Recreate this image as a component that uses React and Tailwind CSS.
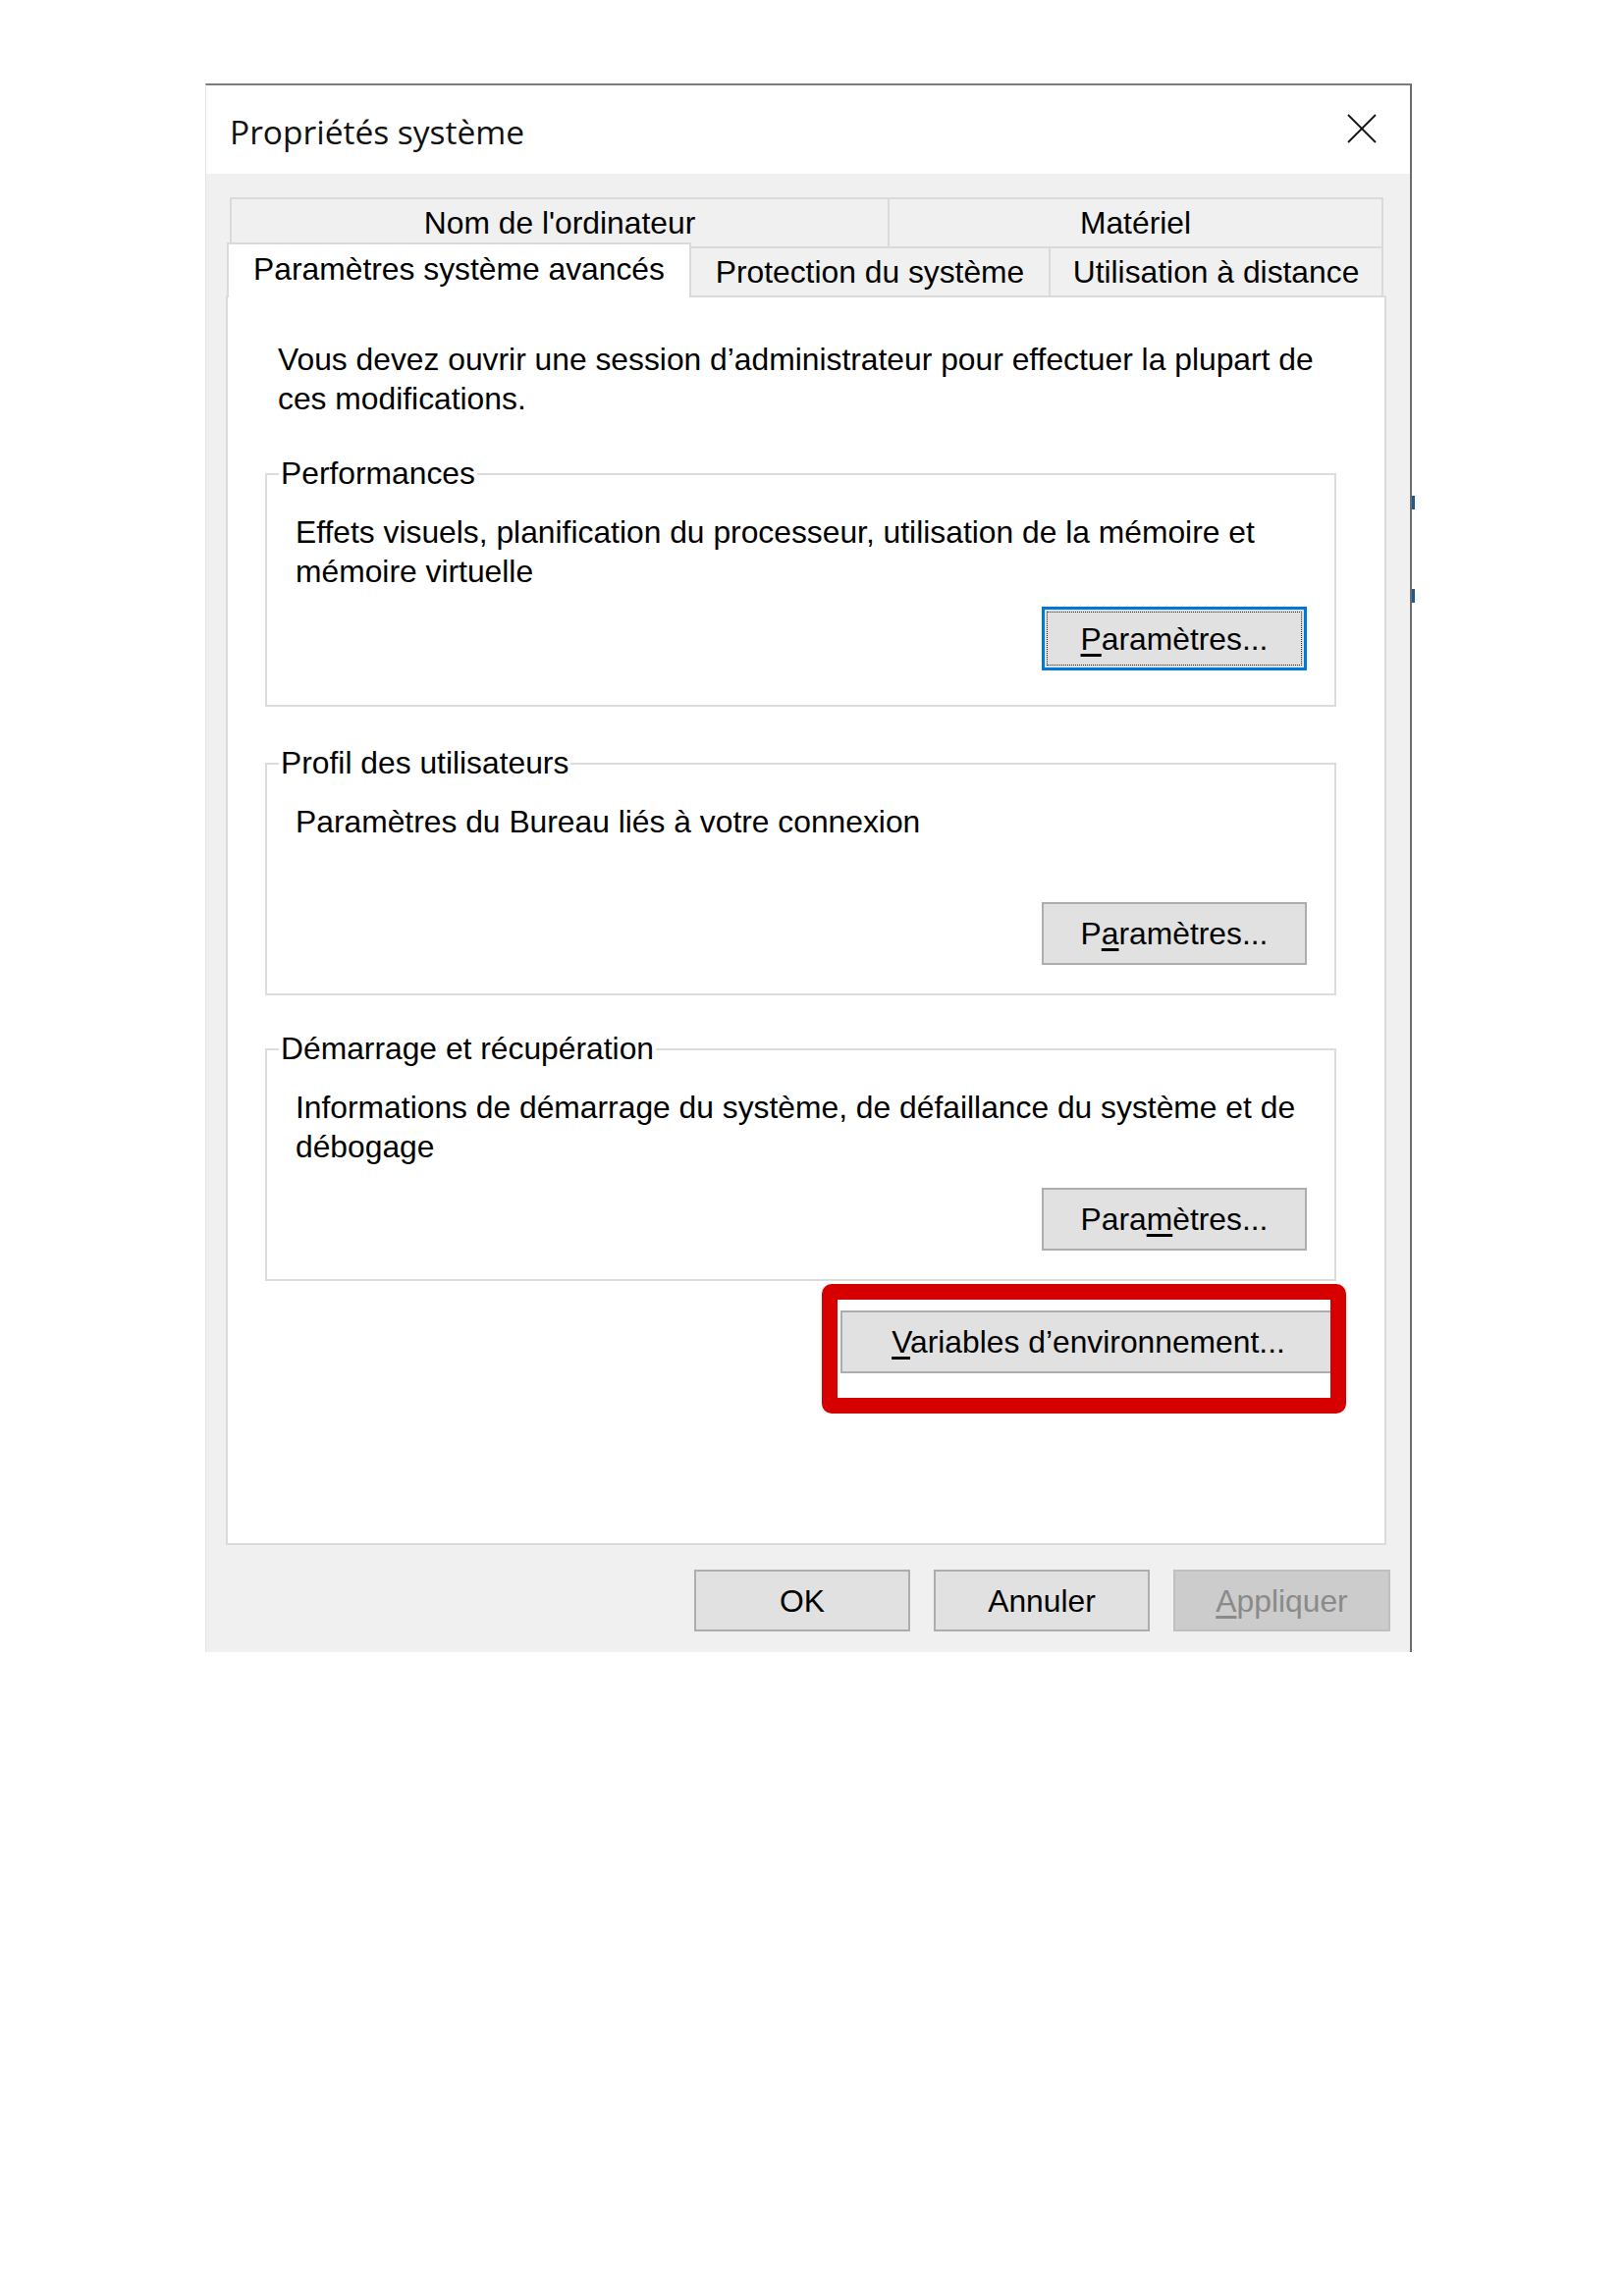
import React from "react";

const BTN_BASE =
  "flex items-center justify-center bg-[#e1e1e1] text-[31.8px] leading-[40px] text-black";
const BTN = `${BTN_BASE} border-2 border-[#adadad]`;

function GroupBox({ label, h, children }) {
  return (
    <div className={`relative border-2 border-[#dcdcdc] ${h} flex flex-col pl-[29px] pr-[28px] pt-[38px]`}>
      <div className="absolute -top-[22px] left-[12px] px-[2px] bg-white text-[31.8px] leading-[40px] text-black whitespace-nowrap">
        {label}
      </div>
      {children}
    </div>
  );
}

export default function App() {
  return (
    <div className="w-[1653px] h-[2339px] bg-white pt-[85px] pl-[209px] font-['Liberation_Sans',Arial,sans-serif] text-black">
      <div className="relative w-[1229px] h-[1598px] border-t-2 border-t-[#7c7c7c] border-l border-l-[#e4e4e4] border-r-2 border-r-[#6c6c6c] bg-[#f0f0f0] flex flex-col">
        {/* blue marks of window behind */}
        <div className="absolute -right-[5px] top-[418px] w-[3px] h-[14px] bg-[#1d5a94]" />
        <div className="absolute -right-[5px] top-[513px] w-[3px] h-[14px] bg-[#1d5a94]" />

        {/* title bar */}
        <div className="h-[90px] bg-white flex items-center justify-between pl-[24px] pr-[34px]">
          <span className="font-['Open_Sans','Noto_Sans',sans-serif] text-[33.5px] leading-[40px] text-[#111] mt-[3px]">
            Propriétés système
          </span>
          <svg width="30" height="30" viewBox="0 0 30 30" className="-mt-[2px]">
            <line x1="1" y1="1" x2="29" y2="29" stroke="#111" strokeWidth="1.8" />
            <line x1="29" y1="1" x2="1" y2="29" stroke="#111" strokeWidth="1.8" />
          </svg>
        </div>

        {/* body */}
        <div className="flex-1 flex flex-col pt-[24px] pl-[20px]">
          {/* tabs */}
          <div className="flex flex-col w-[1182px]">
            <div className="ml-[4px] w-[1175px] h-[50px] flex text-[31.8px] leading-[40px]">
              <div className="w-[670px] border-t-2 border-l-2 border-[#dadada] flex items-center justify-center">
                Nom de l'ordinateur
              </div>
              <div className="flex-1 border-t-2 border-l-2 border-r-2 border-[#dadada] flex items-center justify-center">
                Matériel
              </div>
            </div>
            <div className="h-[50px] flex items-end text-[31.8px] leading-[40px]">
              <div className="relative z-10 ml-[1px] w-[473px] h-[56px] -mb-[2px] bg-white border-t-2 border-l-2 border-r-2 border-[#dadada] flex items-center justify-center pb-[4px]">
                Paramètres système avancés
              </div>
              <div className="w-[364px] h-[50px] border-t-2 border-[#dadada] flex items-center justify-center">
                Protection du système
              </div>
              <div className="w-[341px] h-[50px] border-t-2 border-l-2 border-r-2 border-[#dadada] flex items-center justify-center">
                Utilisation à distance
              </div>
            </div>
          </div>

          {/* panel */}
          <div className="w-[1182px] h-[1273px] bg-white border-2 border-[#dadada] flex flex-col pl-[38px] pr-[49px] pt-[43px]">
            <p className="ml-[13px] text-[31.8px] leading-[40px] whitespace-nowrap">
              Vous devez ouvrir une session d’administrateur pour effectuer la plupart de
              <br />
              ces modifications.
            </p>

            <div className="mt-[56px]">
              <GroupBox label="Performances" h="h-[238px]">
                <p className="text-[31.8px] leading-[40px] whitespace-nowrap">
                  Effets visuels, planification du processeur, utilisation de la mémoire et
                  <br />
                  mémoire virtuelle
                </p>
                <button className={`${BTN_BASE} border-[3px] border-[#0078d7] self-end mt-[16px] w-[270px] h-[65px] outline-dotted outline-1 outline-[#222] outline-offset-[-6px]`}>
                  <span>
                    <span className="underline underline-offset-[4px]">P</span>aramètres...
                  </span>
                </button>
              </GroupBox>
            </div>

            <div className="mt-[57px]">
              <GroupBox label="Profil des utilisateurs" h="h-[237px]">
                <p className="text-[31.8px] leading-[40px] whitespace-nowrap">
                  Paramètres du Bureau liés à votre connexion
                </p>
                <button className={`${BTN} self-end mt-[62px] w-[270px] h-[64px]`}>
                  <span>
                    P<span className="underline underline-offset-[4px]">a</span>ramètres...
                  </span>
                </button>
              </GroupBox>
            </div>

            <div className="mt-[54px]">
              <GroupBox label="Démarrage et récupération" h="h-[237px]">
                <p className="text-[31.8px] leading-[40px] whitespace-nowrap">
                  Informations de démarrage du système, de défaillance du système et de
                  <br />
                  débogage
                </p>
                <button className={`${BTN} self-end mt-[22px] w-[270px] h-[64px]`}>
                  <span>
                    Para<span className="underline underline-offset-[4px]">m</span>ètres...
                  </span>
                </button>
              </GroupBox>
            </div>

            <div className="relative self-end mt-[30px]">
              <button className={`${BTN} w-[505px] h-[64px]`}>
                <span>
                  <span className="underline underline-offset-[4px]">V</span>ariables d’environnement...
                </span>
              </button>
              <div className="absolute -left-[19px] -top-[27px] w-[534px] h-[132px] border-[16px] border-[#d60000] rounded-[10px]" />
            </div>
          </div>

          {/* bottom buttons */}
          <div className="mt-[25px] flex justify-end gap-[24px] pr-[20px]">
            <button className={`${BTN} w-[220px] h-[63px]`}>OK</button>
            <button className={`${BTN} w-[220px] h-[63px]`}>Annuler</button>
            <button className="flex items-center justify-center w-[221px] h-[63px] bg-[#cccccc] border-2 border-[#bfbfbf] text-[31.8px] leading-[40px] text-[#8a8a8a]">
              <span>
                <span className="underline underline-offset-[4px]">A</span>ppliquer
              </span>
            </button>
          </div>
        </div>
      </div>
    </div>
  );
}
